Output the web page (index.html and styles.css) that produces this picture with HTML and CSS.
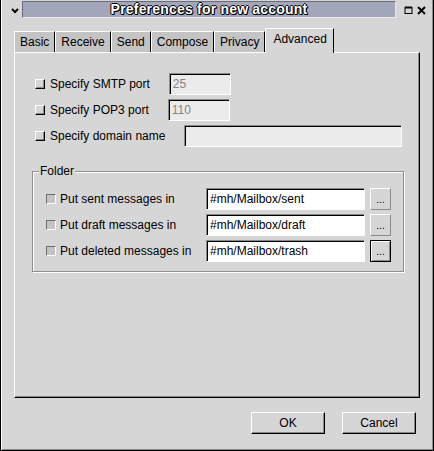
FILE: index.html
```html
<!DOCTYPE html>
<html lang="en">
<head>
    <meta charset="UTF-8" />
    <title>Preferences for new account</title>
    <link rel="stylesheet" href="styles.css">
</head>
<body>

    <div class="window">
        <!-- Barre de titre -->
        <div class="titlebar">
            <span class="menu-btn">
                <svg width="8" height="6" viewBox="0 0 8 6"><path d="M1 1 L4 4 L7 1" fill="none" stroke="#000" stroke-width="2"/></svg>
            </span>
            <div class="title">Preferences for new account</div>
            <span class="ctl">
                <svg width="9" height="8" viewBox="0 0 9 8"><rect x="1" y="1.5" width="7" height="6" fill="none" stroke="#000" stroke-width="1"/><rect x="1" y="0.5" width="7" height="2" fill="#000"/></svg>
            </span>
            <span class="ctl">
                <svg width="9" height="9" viewBox="0 0 9 9"><path d="M1 1 L8 8 M8 1 L1 8" stroke="#000" stroke-width="2"/></svg>
            </span>
        </div>

        <!-- Onglets -->
        <div class="notebook">
            <div class="tabs">
                <div class="tab">Basic</div>
                <div class="tab">Receive</div>
                <div class="tab">Send</div>
                <div class="tab">Compose</div>
                <div class="tab">Privacy</div>
                <div class="tab active">Advanced</div>
            </div>

            <div class="panel">
                <div class="row">
                    <span class="check"></span>
                    <span class="label">Specify SMTP port</span>
                    <div class="entry disabled port">25</div>
                </div>
                <div class="row">
                    <span class="check"></span>
                    <span class="label">Specify POP3 port</span>
                    <div class="entry disabled port">110</div>
                </div>
                <div class="row">
                    <span class="check"></span>
                    <span class="label">Specify domain name</span>
                    <div class="entry disabled wide"></div>
                </div>

                <fieldset class="frame">
                    <legend>Folder</legend>
                    <div class="folder-grid">
                        <div class="opt"><span class="check sunken"></span>Put sent messages in</div>
                        <div class="entry">#mh/Mailbox/sent</div>
                        <button class="browse">...</button>

                        <div class="opt"><span class="check sunken"></span>Put draft messages in</div>
                        <div class="entry">#mh/Mailbox/draft</div>
                        <button class="browse">...</button>

                        <div class="opt"><span class="check sunken"></span>Put deleted messages in</div>
                        <div class="entry">#mh/Mailbox/trash</div>
                        <button class="browse focus">...</button>
                    </div>
                </fieldset>
            </div>
        </div>

        <!-- Boutons du bas -->
        <div class="actions">
            <button class="btn">OK</button>
            <button class="btn">Cancel</button>
        </div>
    </div>

</body>
</html>
```

FILE: styles.css
```css
body {
    margin: 0;
    background: #d6d6d6;
    font-family: "Liberation Sans", Arial, sans-serif;
    font-size: 12px;
    color: #000;
}

.window {
    width: 434px;
    height: 451px;
    box-sizing: border-box;
    border: 1px solid #000;
    border-top: none;
    box-shadow: inset 1px 0 #fff, inset -1px -1px #8a8a8a;
    background: #d6d6d6;
}

/* Barre de titre */
.titlebar {
    height: 20px;
    display: flex;
    align-items: center;
    padding: 0 5px 0 6px;
}

.menu-btn {
    width: 15px;
    display: flex;
    justify-content: center;
    margin-top: 1px;
}

.title {
    flex: 1;
    height: 15px;
    margin: 0 6px 1px 0;
    background: #a3a6ba;
    border: 1px solid;
    border-color: #6a6a78 #e8e8ee #e8e8ee #6a6a78;
    color: #fff;
    font-weight: bold;
    font-size: 14px;
    line-height: 15px;
    text-align: center;
    letter-spacing: 0.2px;
    text-shadow: 1px 0 #000, -1px 0 #000, 0 1px #000, 0 -1px #000, 1px 1px #000;
}

.ctl {
    width: 13px;
    display: flex;
    justify-content: center;
}

/* Onglets */
.notebook {
    margin: 8px 13px 0 13px;
}

.tabs {
    display: flex;
    align-items: flex-end;
    height: 24px;
}

.tab {
    height: 20px;
    line-height: 21px;
    padding: 0 5px;
    background: #c4c4c4;
    border-top: 1px solid #fff;
    border-left: 1px solid #fff;
    border-right: 1px solid #000;
}

.tab.active {
    position: relative;
    height: 24px;
    margin-bottom: -1px;
    line-height: 21px;
    padding: 0 6px 0 7px;
    background: #d6d6d6;
}

.panel {
    height: 346px;
    box-sizing: border-box;
    padding: 20px 15px 0 18px;
    border: 1px solid;
    border-color: #fff #000 #000 #fff;
    box-shadow: inset -1px -1px #8a8a8a;
}

.row {
    display: flex;
    align-items: center;
    height: 22px;
    margin-bottom: 4px;
    padding-left: 2px;
}

.check {
    width: 8px;
    height: 8px;
    border: 1px solid;
    border-color: #fff #000 #000 #fff;
    box-shadow: inset -1px -1px #8a8a8a;
    background: #d6d6d6;
    margin-right: 5px;
}

.check.sunken {
    border-color: #6e6e6e #fff #fff #6e6e6e;
    box-shadow: none;
    background: #c4c4c4;
    margin-right: 4px;
}

.label {
    margin-right: 19px;
}

.entry {
    box-sizing: border-box;
    height: 22px;
    border: 1px solid;
    border-color: #8a8a8a #fff #fff #8a8a8a;
    box-shadow: inset 1px 1px #000;
    background: #fff;
    padding: 0 3px;
    line-height: 20px;
    white-space: nowrap;
    overflow: hidden;
}

.entry.disabled {
    background: #ebebeb;
    color: #848484;
}

.entry.port {
    width: 62px;
}

.entry.wide {
    flex: 1;
    margin-right: 2px;
}

/* Cadre Folder */
.frame {
    margin: 17px 0 0 -1px;
    padding: 10px 12px 9px 13px;
    min-width: 0;
    border: 1px solid #8e8e8e;
    box-shadow: inset 1px 1px #fff, 1px 1px #fff;
}

.frame legend {
    margin-left: -7px;
    padding: 0 1px;
    line-height: 14px;
    background: #d6d6d6;
}

.folder-grid {
    display: grid;
    grid-template-columns: 155px 159px 21px;
    grid-auto-rows: 22px;
    row-gap: 4px;
    column-gap: 5px;
    align-items: center;
}

.opt {
    display: flex;
    align-items: center;
    white-space: nowrap;
}

.browse {
    height: 22px;
    padding: 0;
    font: inherit;
    font-size: 10px;
    color: #000;
    background: #d6d6d6;
    border: 1px solid;
    border-color: #fff #8a8a8a #8a8a8a #fff;
}

.browse.focus {
    border-color: #000;
    box-shadow: inset 1px 1px #fff, inset -1px -1px #8a8a8a;
}

/* Boutons OK / Annuler */
.actions {
    display: flex;
    justify-content: flex-end;
    gap: 17px;
    margin: 14px 17px 0 0;
}

.btn {
    width: 74px;
    height: 22px;
    padding: 0;
    font: inherit;
    color: #000;
    background: #d6d6d6;
    border: 1px solid;
    border-color: #fff #000 #000 #fff;
    box-shadow: inset -1px -1px #8a8a8a;
}
```
